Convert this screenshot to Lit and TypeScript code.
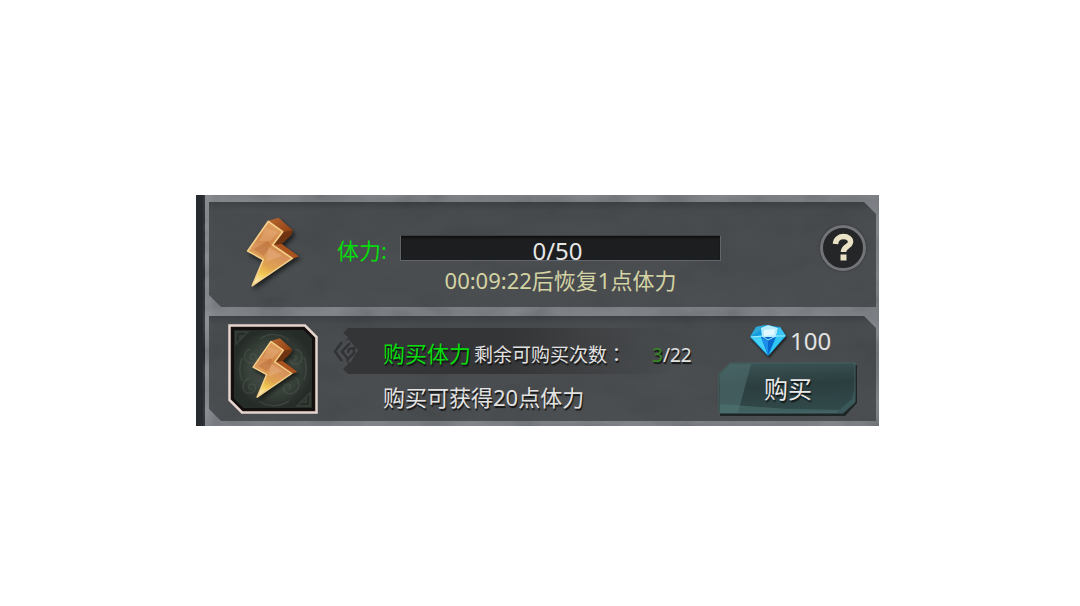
import { LitElement, html, css } from "lit";
import { customElement, property } from "lit/decorators.js";

@customElement("bolt-icon")
class BoltIcon extends LitElement {
  static styles = css`
    :host { display: block; }
    .bolt { display: block; width: 100%; height: 100%; overflow: visible; filter: drop-shadow(2px 3px 2px rgba(0, 0, 0, 0.6)); }
  `;
  render() {
    return html`<svg class="bolt" viewBox="171 80 156 208" aria-hidden="true">
      <defs>
        <linearGradient id="face" x1="0.6" y1="0" x2="0.3" y2="1">
          <stop offset="0" stop-color="#e2a465" />
          <stop offset="0.3" stop-color="#d08848" />
          <stop offset="0.48" stop-color="#d8945c" />
          <stop offset="0.68" stop-color="#dfa250" />
          <stop offset="0.82" stop-color="#f0c850" />
          <stop offset="1" stop-color="#fff3c8" />
        </linearGradient>
        <linearGradient id="side" x1="0" y1="0" x2="0.7" y2="1">
          <stop offset="0" stop-color="#b9682f" />
          <stop offset="0.5" stop-color="#974718" />
          <stop offset="1" stop-color="#6b300f" />
        </linearGradient>
      </defs>
      <path fill="url(#side)" d="M235 90 L266 81 L308 119 L304 132 L275 160 L326 197 L308 204 L248 164 Z" />
      <path fill="#6f3412" d="M279 124 L308 119 L304 132 L275 160 L250 163 Z" />
      <path fill="#a9531e" d="M250 163 L275 160 L326 197 L308 204 Z" />
      <path fill="url(#face)" stroke="#f4cf8a" stroke-width="5" stroke-linejoin="round"
        d="M235 92 L278 123 L248 163 L307 203 L187 285 L220 207 L173 181 Z" />
      <path fill="#f2c09a" opacity="0.3" d="M227 112 L264 124 L240 152 L206 151 Z M236 169 L277 195 L228 213 Z" />
      <path fill="#9a4b20" opacity="0.25" d="M190 176 L235 150 L242 166 L221 196 Z" />
    </svg>`;
  }
}

@customElement("rock-texture")
class RockTexture extends LitElement {
  static styles = css`
    :host { position: absolute; inset: 0; pointer-events: none; }
    .rock { display: block; width: 100%; height: 100%; opacity: 0.16; }
  `;
  render() {
    return html`<svg class="rock" aria-hidden="true">
      <filter id="grain" x="0" y="0" width="100%" height="100%">
        <feTurbulence type="fractalNoise" baseFrequency="0.02 0.035" numOctaves="4" seed="8" />
        <feColorMatrix values="1.2 0 0 0 -0.1  1.2 0 0 0 -0.09  1.2 0 0 0 -0.08  0 0 0 0 1" />
      </filter>
      <rect width="100%" height="100%" filter="url(#grain)" />
    </svg>`;
  }
}

@customElement("stamina-card")
class StaminaCard extends LitElement {
  @property({ type: Number }) current = 0;
  @property({ type: Number }) max = 50;
  @property() countdown = "";

  static styles = css`
    :host { display: block; }
    .card {
      display: flex;
      align-items: flex-start;
      box-sizing: border-box;
      min-height: 105px;
      padding: 15px 10px 10px 38px;
    }
    .bolt { width: 52px; height: 70px; flex: none; }
    .label { margin: 18px 15px 0 38px; color: #06dc0c; font-size: 22px; line-height: 30px; width: 48px; white-space: nowrap; }
    .gauge { flex: 1; margin-top: 18px; text-align: center; }
    .bar {
      position: relative;
      height: 26px;
      border: 1px solid #62666a;
      border-top-color: #3b3e41;
      box-sizing: border-box;
      background: #1d1e1f;
      box-shadow: inset 0 2px 2px #111;
    }
    .fill { height: 100%; background: #27a52c; }
    .value { position: absolute; inset: 0; color: #e6e6e6; font-size: 24px; line-height: 29px; margin-right: 6px; }
    .timer { margin-top: 4px; color: #d3d3a4; font-size: 22px; line-height: 30px; white-space: nowrap; }
    .help {
      flex: none;
      width: 46px;
      height: 46px;
      margin: 8px 0 0 99px;
      padding: 0;
      border: 3px solid #727479;
      border-radius: 50%;
      background: #252627;
      box-shadow: 0 0 2px #292b2d;
    }
    .mark { display: block; width: 100%; height: 100%; }
  `;
  render() {
    const width = `${(this.current / this.max) * 100}%`;
    return html`<div class="card">
      <bolt-icon class="bolt"></bolt-icon>
      <span class="label">体力:</span>
      <div class="gauge">
        <div class="bar">
          <div class="fill" style="width:${width}"></div>
          <span class="value">${this.current}/${this.max}</span>
        </div>
        <div class="timer">${this.countdown}后恢复1点体力</div>
      </div>
      <button class="help" aria-label="帮助">
        <svg class="mark" viewBox="0 0 40 40" aria-hidden="true">
          <path d="M12.5 16 C13 5.500 28.500 7 27.500 14.500 C27 18.500 20.500 18.500 20.500 24" fill="none" stroke="#e9e2c4" stroke-width="5.500" />
          <rect x="17.500" y="26.500" width="6" height="6" fill="#e9e2c4" />
        </svg>
      </button>
    </div>`;
  }
}

@customElement("purchase-card")
class PurchaseCard extends LitElement {
  @property({ type: Number }) used = 3;
  @property({ type: Number }) limit = 22;
  @property({ type: Number }) gain = 20;
  @property({ type: Number }) price = 100;

  static styles = css`
    :host { display: block; }
    .card {
      display: flex;
      align-items: flex-start;
      box-sizing: border-box;
      min-height: 105px;
      padding: 8px 18px 5px 19px;
    }
    .thumb { position: relative; flex: none; width: 90px; height: 90px; }
    .frame { display: block; width: 100%; height: 100%; }
    .bolt { position: absolute; left: 24px; top: 14px; width: 46px; height: 60px; }
    .info { flex: 1; margin-left: 15px; }
    .banner { position: relative; height: 46px; margin-top: 4px; padding: 10px 0 0 50px; box-sizing: border-box; }
    .plate {
      position: absolute;
      inset: 0 50px 0 10px;
      background: linear-gradient(90deg, #343537 0 50%, rgba(52, 53, 55, 0));
      clip-path: polygon(5px 0, 100% 0, 100% 100%, 5px 100%, 0 41px, 5px 36px, 3px 32px, 15px 23px, 3px 13px, 5px 9px, 0 5px);
    }
    .rune { position: absolute; left: 0; top: 9px; width: 26px; height: 30px; }
    .line { position: relative; display: flex; align-items: baseline; line-height: 30px; white-space: nowrap; text-shadow: 1px 2px 1px #141414; }
    .title { color: #06dc0c; font-size: 22px; }
    .remain { margin-left: 3px; color: #e2e2e2; font-size: 19px; }
    .colon { font-family: "Noto Sans CJK TC", sans-serif; }
    .count { margin-left: 26px; color: #e2e2e2; font-size: 19px; }
    .used { color: #35891f; }
    .desc { margin: 8px 0 0 50px; color: #e2e2e2; font-size: 22px; line-height: 30px; white-space: nowrap; text-shadow: 1px 2px 1px #141414; }
    .deal { flex: none; width: 140px; }
    .price { display: flex; align-items: flex-start; height: 38px; padding-left: 31px; color: #e2e2e2; font-size: 24px; line-height: 34px; }
    .gem { width: 38px; height: 34px; margin: 0 3px 0 0; overflow: visible; filter: drop-shadow(1px 2px 1px rgba(0, 0, 0, 0.6)); }
    .buy {
      position: relative;
      display: block;
      width: 100%;
      height: 54px;
      padding: 0;
      border: 0;
      background: none;
      color: #e8e8e8;
      font: inherit;
      font-size: 24px;
      line-height: 32px;
      text-shadow: 1px 2px 1px #101818;
    }
    .face { position: absolute; inset: 0; width: 100%; height: 100%; }
    .text { position: relative; }
  `;
  render() {
    return html`<div class="card">
      <div class="thumb">
        <svg class="frame" viewBox="0 0 90 90" aria-hidden="true">
          <defs>
            <radialGradient id="well">
              <stop offset="0" stop-color="#4e584e" />
              <stop offset="0.6" stop-color="#3a433c" />
              <stop offset="1" stop-color="#262c28" />
            </radialGradient>
          </defs>
          <path d="M1.500 1.500 H77 L88.500 13 V88.500 H14 L1.500 76 Z" fill="#17110f" stroke="#e6d4cf" stroke-width="2.500" />
          <path d="M5 5 H76 L85 14 V85 H15 L5 75 Z" fill="url(#well)" stroke="#120f0e" stroke-width="2" />
          <g fill="none" stroke="#5a665a" stroke-width="1.500" opacity="0.35">
            <path d="M8 8 H20 L8 20 Z M12 17 V12 H16" />
            <path d="M82 82 H69 L82 69 Z M78 73 V78 H73" />
            <path d="M22 25 c-8 3 -7 15 2 14 c7 -2 5 -10 0 -9 c-4 2 -2 6 1 5" />
            <path d="M67 25 c10 2 9 17 -1 15 c-7 -3 -5 -10 0 -9 c4 2 2 6 -1 5" />
            <path d="M22 54 c-10 2 -9 17 1 15 c7 -3 5 -10 0 -9 c-4 2 -2 6 1 5" />
            <path d="M62 53 c9 -2 12 10 5 15 c-7 5 -15 -2 -10 -7 c4 -3 8 2 4 4" />
            <path d="M32 15 c8 -6 20 -6 29 1 M31 77 c9 6 20 6 30 0 M14 34 c-3 8 -3 15 0 23 M76 33 c3 8 3 15 0 23" />
          </g>
        </svg>
        <bolt-icon class="bolt"></bolt-icon>
      </div>
      <div class="info">
        <div class="banner">
          <div class="plate"></div>
          <svg class="rune" viewBox="0 0 26 30" fill="none" aria-hidden="true">
            <path d="M15 2 L25 13 L17 26 L8 15 Z" fill="#4b4d50" />
            <g stroke="#303234" stroke-width="2.500">
              <path d="M9 5 L2 14.500 L9 24" />
              <path d="M17 6 L9 14.500 L15 22 L21 16 V11 L16 12 L15 16" />
            </g>
          </svg>
          <div class="line">
            <span class="title">购买体力</span>
            <span class="remain">剩余可购买次数<span class="colon">：</span></span>
            <span class="count"><span class="used">${this.used}</span>/${this.limit}</span>
          </div>
        </div>
        <div class="desc">购买可获得${this.gain}点体力</div>
      </div>
      <div class="deal">
        <div class="price">
          <svg class="gem" viewBox="0 0 38 34" aria-hidden="true">
            <path d="M7 3 L17 1 L31 3 L37 12 L19 32 L1 13 Z" fill="#129be0" />
            <path d="M7 3 L17 1 L12 6 L1 13 Z" fill="#2fa9d8" />
            <path d="M12 4 L19 1 L29 4 L27 13 L13 13 Z" fill="#b5edff" />
            <path d="M15 6 L26 5 L25 11 L15 12 Z" fill="#e2f8ff" />
            <path d="M29 4 L31 3 L37 12 L27 13 Z" fill="#38c4f4" />
            <path d="M2 13 L12 12 L19 31 Z" fill="#45d2fb" />
            <path d="M12 13 L27 13 L19 31 Z" fill="#0868cc" />
            <path d="M12 13 L19 17 L19 30 Z" fill="#1c8de8" />
            <path d="M27 13 L36 12 L20 31 Z" fill="#31c6f3" />
            <path d="M2 13 L13 12 L19 16 L27 12 L36 12" fill="none" stroke="#a5efff" />
          </svg>
          <span>${this.price}</span>
        </div>
        <button class="buy">
          <svg class="face" viewBox="0 0 140 54" preserveAspectRatio="none" aria-hidden="true">
            <defs>
              <linearGradient id="steel" x1="0" y1="0" x2="0.15" y2="1">
                <stop offset="0" stop-color="#3c5556" />
                <stop offset="0.5" stop-color="#2b3d3f" />
                <stop offset="1" stop-color="#31494a" />
              </linearGradient>
            </defs>
            <path d="M2 13 L13 3 H139 V41 L127 54 H2 Z" fill="#1d2525" />
            <path d="M1 12 L12 1 H137 V40 L125 51 H1 Z" fill="url(#steel)" stroke="#456160" />
            <path d="M2 12 L12 2 H33 L20 51 H2 Z" fill="#4e6c6b" opacity="0.65" />
            <path d="M2 42 L70 47 L128 48 L125 51 H2 Z" fill="#4f7775" opacity="0.5" />
            <path d="M137 24 V40 L125 51 H118 L134 37 Z" fill="#3a5859" />
          </svg>
          <span class="text">购买</span>
        </button>
      </div>
    </div>`;
  }
}

@customElement("app-root")
class AppRoot extends LitElement {
  static styles = css`
    :host {
      display: block;
      box-sizing: border-box;
      min-height: 100vh;
      padding: 195px 201px 20px 196px;
      background: #ffffff;
      font-family: "Noto Sans", "Noto Sans CJK SC", sans-serif;
    }
    .panel {
      position: relative;
      display: flex;
      flex-direction: column;
      gap: 9px;
      padding: 7px 3px 5px 6px;
      border-left: 7px solid #252b2e;
      background: linear-gradient(90deg, #171b20 0 2px, #7b7f85 2px 5px, #6f7277 12px);
    }
    .slot {
      --cut: 12px;
      position: relative;
      background: linear-gradient(180deg, rgba(43, 47, 49, 0.78), rgba(57, 60, 62, 0.78) 8%, rgba(61, 64, 66, 0.78));
      clip-path: polygon(0 0, calc(100% - var(--cut)) 0, 100% var(--cut), 100% 100%, var(--cut) 100%, 0 calc(100% - var(--cut)));
    }
  `;
  render() {
    return html`<main class="panel">
      <rock-texture></rock-texture>
      <stamina-card class="slot" current="0" max="50" countdown="00:09:22"></stamina-card>
      <purchase-card class="slot" used="3" limit="22" gain="20" price="100"></purchase-card>
    </main>`;
  }
}
